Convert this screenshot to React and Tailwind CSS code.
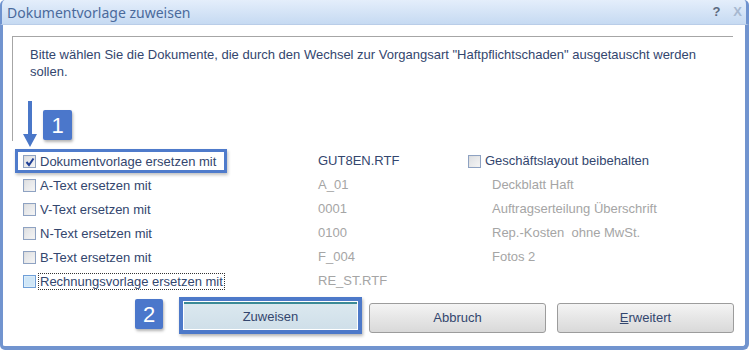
import React from "react";

function Check({ checked, hover }) {
  return (
    <span
      className={
        "relative inline-block w-[13px] h-[13px] shrink-0 border " +
        (hover ? "border-[#6f9fd8] bg-[#dcedf9]" : "border-[#8ea2c2] bg-gradient-to-br from-[#dadada] to-[#f4f4f4]")
      }
    >
      <span className={"absolute inset-[1px] " + (hover ? "bg-[#cfe6f7]" : "bg-gradient-to-br from-[#dfe1e4] to-[#f3f3f3]")} />
      {checked && (
        <svg className="absolute left-[1px] top-[1px]" width="10" height="10" viewBox="0 0 10 10">
          <path d="M1.5 5 L4 8 L8.5 1.5" fill="none" stroke="#1f3f95" strokeWidth="2" />
        </svg>
      )}
    </span>
  );
}

function Row({ label, value, right, checked, dark, first, focus, hover }) {
  return (
    <div className="relative flex items-center h-[24px]">
      {first && (
        <div className="absolute left-[-8px] top-0 w-[212px] h-[24px] border-[3px] border-[#4f7bcb] shadow-[1px_2px_3px_rgba(0,0,0,0.25)]" />
      )}
      <div className="flex items-center w-[295px]">
        <Check checked={checked} hover={hover} />
        <span
          className={
            "ml-[3px] px-[1px] leading-[15px] " +
            (focus ? "outline outline-1 outline-dotted outline-[#333]" : "")
          }
        >
          {label}
        </span>
      </div>
      <div className={"w-[150px] " + (dark ? "text-[#33466e]" : "text-[#a5a5a5]")}>{value}</div>
      {right === "__cb" ? (
        <div className="flex items-center">
          <Check />
          <span className="ml-[4px] text-[#33466e]">Geschäftslayout beibehalten</span>
        </div>
      ) : (
        <div className="pl-[24px] text-[#a5a5a5] whitespace-pre">{right}</div>
      )}
    </div>
  );
}

export default function App() {
  return (
    <div
      className="w-[749px] h-[350px] overflow-hidden bg-white text-[13px] text-[#33466e]"
      style={{ fontFamily: '"Liberation Sans", Arial, sans-serif' }}
    >
      <div className="relative w-[749px] h-[350px] flex flex-col">
        {/* title bar */}
        <div className="h-[25px] flex items-center justify-between bg-gradient-to-b from-[#e4eefb] to-[#c6daf2] border-l-[2px] border-r-[3px] border-[#6f93cf] rounded-tl-[5px] rounded-tr-[5px] border-b border-b-[#b9cde8]">
          <span
            className="pl-[5px] text-[14px] text-[#4a6a9c]"
            style={{ fontFamily: '"Noto Sans", "Open Sans", sans-serif' }}
          >
            Dokumentvorlage zuweisen
          </span>
          <div className="flex items-center gap-[13px] pr-[4px] text-[13px]">
            <span className="font-bold text-[#5c6a80]">?</span>
            <span className="text-[#a7b8d0] font-bold">X</span>
          </div>
        </div>

        {/* body */}
        <div className="relative flex-1 flex flex-col border-l-[3px] border-r-[4px] border-b-[4px] border-[#7194cf] rounded-bl-[5px] rounded-br-[6px]">
          {/* group box */}
          <div className="ml-[9px] mt-[11px] w-[721px] h-[105px] border-t border-l border-[#a6a6a6] pl-[17px] pt-[9px] leading-[17px]">
            <p className="w-[680px]">
              Bitte wählen Sie die Dokumente, die durch den Wechsel zur Vorgangsart "Haftpflichtschaden" ausgetauscht werden sollen.
            </p>
          </div>

          {/* rows */}
          <div className="ml-[20px] mt-[8px] flex flex-col">
            <Row first checked dark label="Dokumentvorlage ersetzen mit" value="GUT8EN.RTF" right="__cb" />
            <Row label="A-Text ersetzen mit" value="A_01" right="Deckblatt Haft" />
            <Row label="V-Text ersetzen mit" value="0001" right="Auftragserteilung Überschrift" />
            <Row label="N-Text ersetzen mit" value="0100" right="Rep.-Kosten  ohne MwSt." />
            <Row label="B-Text ersetzen mit" value="F_004" right="Fotos 2" />
            <Row focus hover label="Rechnungsvorlage ersetzen mit" value="RE_ST.RTF" right="" />
          </div>

          {/* buttons */}
          <div className="mt-[4px] ml-[176px] flex items-start">
            <div className="w-[183px] h-[37px] border-4 border-[#4d79c9] p-[1px] shadow-[1px_2px_3px_rgba(0,0,0,0.3)]">
              <div className="h-full flex items-center justify-center bg-gradient-to-b from-[#dbe8ef] to-[#cfdfe9] border-t-2 border-[#3b8a96] text-[#33466e]">
                Zuweisen
              </div>
            </div>
            <div className="ml-[7px] mt-[6px] w-[177px] h-[30px] flex items-center justify-center rounded-[3px] border border-[#9c9c9c] bg-gradient-to-b from-[#f4f4f4] via-[#e6e6e6] to-[#d9d9d9] text-[#33466e]">
              Abbruch
            </div>
            <div className="ml-[11px] mt-[6px] w-[177px] h-[30px] flex items-center justify-center rounded-[3px] border border-[#9c9c9c] bg-gradient-to-b from-[#f4f4f4] via-[#e6e6e6] to-[#d9d9d9] text-[#33466e]">
              <span>
                <span className="underline">E</span>rweitert
              </span>
            </div>
          </div>

          {/* annotation: arrow */}
          <svg className="absolute left-[19px] top-[76px]" width="16" height="47" viewBox="0 0 16 47">
            <rect x="6" y="0" width="4" height="36" fill="#4a77c8" />
            <path d="M1 33 L15 33 L8 46 Z" fill="#4a77c8" />
          </svg>
          {/* badge 1 */}
          <div className="absolute left-[40px] top-[85px] w-[29px] h-[30px] rounded-[2px] bg-[#4b77cb] text-white text-[22px] flex items-center justify-center shadow-[1px_2px_3px_rgba(0,0,0,0.3)]">
            1
          </div>
          {/* badge 2 */}
          <div className="absolute left-[132px] top-[274px] w-[28px] h-[30px] rounded-[2px] bg-[#4b77cb] text-white text-[22px] flex items-center justify-center shadow-[1px_2px_3px_rgba(0,0,0,0.3)]">
            2
          </div>
        </div>
      </div>
    </div>
  );
}
